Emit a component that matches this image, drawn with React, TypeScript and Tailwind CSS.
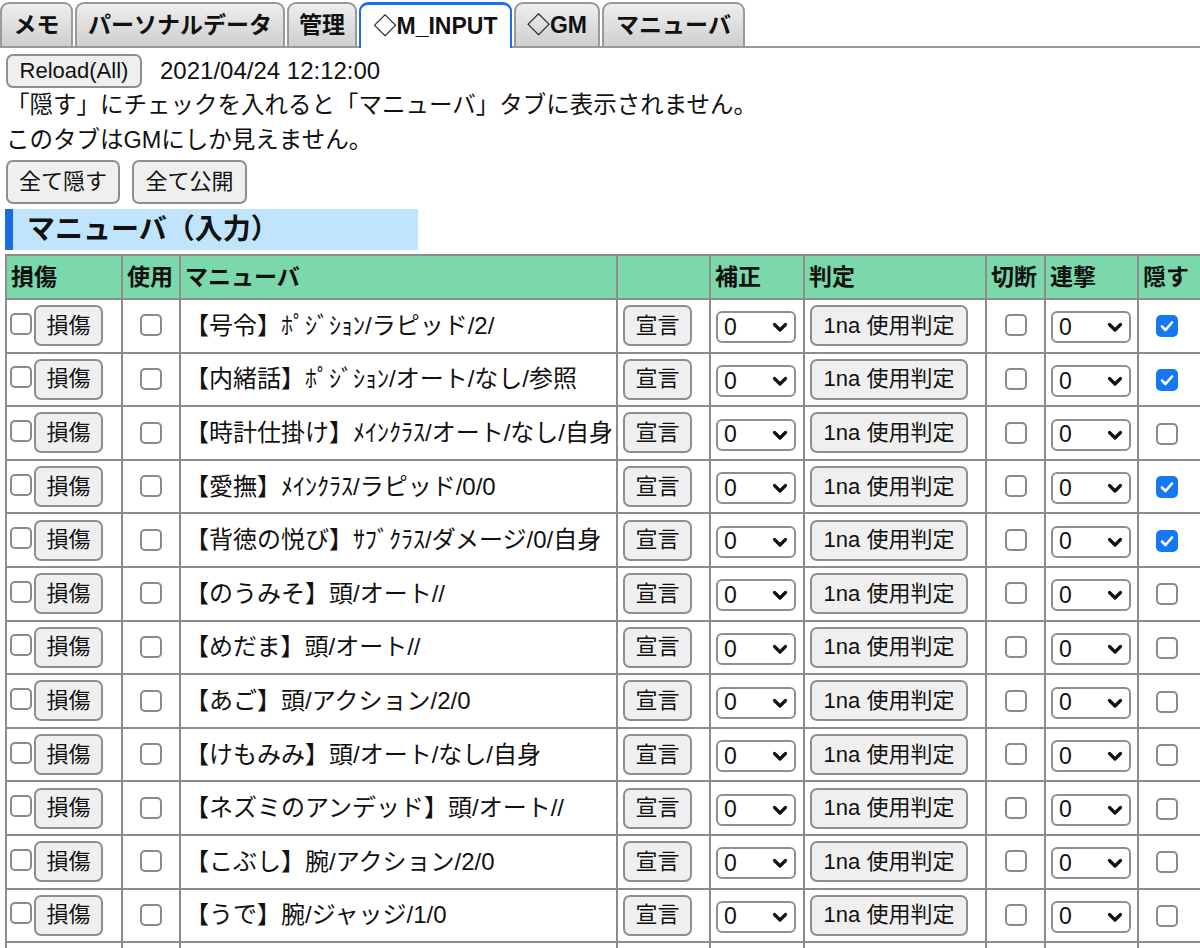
import React from "react";

const rows: { name: string; hide: boolean }[] = [
  { name: "【号令】ﾎﾟｼﾞｼｮﾝ/ラピッド/2/", hide: true },
  { name: "【内緒話】ﾎﾟｼﾞｼｮﾝ/オート/なし/参照", hide: true },
  { name: "【時計仕掛け】ﾒｲﾝｸﾗｽ/オート/なし/自身", hide: false },
  { name: "【愛撫】ﾒｲﾝｸﾗｽ/ラピッド/0/0", hide: true },
  { name: "【背徳の悦び】ｻﾌﾞｸﾗｽ/ダメージ/0/自身", hide: true },
  { name: "【のうみそ】頭/オート//", hide: false },
  { name: "【めだま】頭/オート//", hide: false },
  { name: "【あご】頭/アクション/2/0", hide: false },
  { name: "【けもみみ】頭/オート/なし/自身", hide: false },
  { name: "【ネズミのアンデッド】頭/オート//", hide: false },
  { name: "【こぶし】腕/アクション/2/0", hide: false },
  { name: "【うで】腕/ジャッジ/1/0", hide: false },
  { name: "【かた】腕/アクション/4/0", hide: false },
];

function Box({ checked = false }: { checked?: boolean }) {
  if (checked) {
    return (
      <span className="inline-flex w-[22px] h-[22px] rounded-[5px] bg-[#1677f2] items-center justify-center shrink-0">
        <svg width="16" height="16" viewBox="0 0 16 16">
          <polyline points="3,8.5 6.5,12 13,4.5" fill="none" stroke="white" strokeWidth="2.6" strokeLinecap="round" strokeLinejoin="round" />
        </svg>
      </span>
    );
  }
  return <span className="inline-block w-[22px] h-[22px] rounded-[5px] border-2 border-[#8a8a8a] bg-white shrink-0" />;
}

function Btn({ children, className = "" }: { children: React.ReactNode; className?: string }) {
  return (
    <span className={"inline-flex items-center justify-center bg-[#efefef] border-2 border-[#8e8e8e] rounded-[7px] text-[22px] leading-none text-[#111] " + className}>
      {children}
    </span>
  );
}

function Sel() {
  return (
    <span className="inline-flex items-center justify-between w-[80px] h-[32px] bg-white border-2 border-[#8e8e8e] rounded-[6px] pl-[6px] pr-[6px] text-[23px] leading-none">
      <span>0</span>
      <svg width="16" height="12" viewBox="0 0 16 12">
        <polyline points="2.5,3.5 8,9 13.5,3.5" fill="none" stroke="#111" strokeWidth="3.2" strokeLinecap="round" strokeLinejoin="round" />
      </svg>
    </span>
  );
}

const tabs = [
  { label: "メモ", w: "w-[73px]" },
  { label: "パーソナルデータ", w: "w-[210px]" },
  { label: "管理", w: "w-[70px]" },
  { label: "◇M_INPUT", w: "w-[153px]", active: true },
  { label: "◇GM", w: "w-[86px]" },
  { label: "マニューバ", w: "w-[143px]" },
];

export default function App() {
  return (
    <div className="w-[1200px] h-[948px] overflow-hidden bg-white text-[#111] font-['Liberation_Sans','Noto_Sans_CJK_JP',sans-serif]">
      {/* Tabs */}
      <div className="flex items-end gap-[2px] pt-[2px] border-b-2 border-[#9a9a9a] h-[48px]">
        {tabs.map((t) =>
          t.active ? (
            <div
              key={t.label}
              className={`${t.w} h-[46px] -mb-[2px] flex items-center justify-center bg-white rounded-t-[9px] border-t-[3px] border-x-2 border-[#1a6fe6] border-b-0 text-[23px] font-bold leading-none`}
            >
              {t.label}
            </div>
          ) : (
            <div
              key={t.label}
              className={`${t.w} h-[44px] flex items-center justify-center bg-gradient-to-b from-[#eeeeee] to-[#cfcfcf] rounded-t-[9px] border-2 border-b-0 border-[#9a9a9a] text-[23px] font-bold leading-none`}
            >
              {t.label}
            </div>
          )
        )}
      </div>

      <div className="pl-[6px]">
        <div className="flex items-center mt-[6px] h-[34px]">
          <Btn className="w-[136px] h-[34px]">Reload(All)</Btn>
          <span className="ml-[18px] text-[24px] leading-none">2021/04/24 12:12:00</span>
        </div>
        <div className="text-[23.5px] leading-[35px]">
          <div>「隠す」にチェックを入れると「マニューバ」タブに表示されません。</div>
          <div>このタブはGMにしか見えません。</div>
        </div>
        <div className="flex gap-[12px] mt-[2px]">
          <Btn className="w-[114px] h-[44px]">全て隠す</Btn>
          <Btn className="w-[115px] h-[44px]">全て公開</Btn>
        </div>
      </div>

      <div className="ml-[5px] mt-[5px] w-[413px] h-[41px] bg-[#c0e4fb] border-l-[8px] border-[#1a6ce0] flex items-center pl-[14px] text-[28px] font-bold leading-none">
        マニューバ（入力）
      </div>

      <table className="ml-[5px] mt-[4px] table-fixed border-collapse w-[1206px] text-[24px]">
        <colgroup>
          <col className="w-[116px]" />
          <col className="w-[58px]" />
          <col className="w-[437px]" />
          <col className="w-[93px]" />
          <col className="w-[94px]" />
          <col className="w-[182px]" />
          <col className="w-[59px]" />
          <col className="w-[93px]" />
          <col className="w-[74px]" />
        </colgroup>
        <thead>
          <tr className="h-[44px] bg-[#7bd8ab]">
            {["損傷", "使用", "マニューバ", "", "補正", "判定", "切断", "連撃", "隠す"].map((h, i) => (
              <th key={i} className="border-2 border-[#8c8c8c] text-left font-bold text-[23px] px-[4px] leading-none align-middle">
                {h}
              </th>
            ))}
          </tr>
        </thead>
        <tbody>
          {rows.map((r, i) => (
            <tr key={i} className="h-[53.6px]">
              <td className="border-2 border-[#8c8c8c] pl-[3px] p-0">
                <div className="flex items-center gap-[2px]">
                  <span className="-mt-[4px] flex"><Box /></span>
                  <Btn className="w-[69px] h-[41px]">損傷</Btn>
                </div>
              </td>
              <td className="border-2 border-[#8c8c8c] p-0 text-center">
                <span className="inline-flex -mt-[4px] align-middle"><Box /></span>
              </td>
              <td className="border-2 border-[#8c8c8c] pl-[4px] p-0 whitespace-nowrap overflow-hidden leading-none">
                {r.name}
              </td>
              <td className="border-2 border-[#8c8c8c] pl-[5px] p-0">
                <Btn className="w-[69px] h-[41px] align-middle">宣言</Btn>
              </td>
              <td className="border-2 border-[#8c8c8c] pl-[5px] p-0">
                <span className="inline-flex align-middle"><Sel /></span>
              </td>
              <td className="border-2 border-[#8c8c8c] pl-[5px] p-0">
                <Btn className="w-[158px] h-[41px] align-middle">1na 使用判定</Btn>
              </td>
              <td className="border-2 border-[#8c8c8c] p-0 text-center">
                <span className="inline-flex -mt-[4px] align-middle"><Box /></span>
              </td>
              <td className="border-2 border-[#8c8c8c] pl-[5px] p-0">
                <span className="inline-flex align-middle"><Sel /></span>
              </td>
              <td className="border-2 border-[#8c8c8c] pl-[17px] p-0">
                <span className="inline-flex -mt-[2px] align-middle"><Box checked={r.hide} /></span>
              </td>
            </tr>
          ))}
        </tbody>
      </table>
    </div>
  );
}
